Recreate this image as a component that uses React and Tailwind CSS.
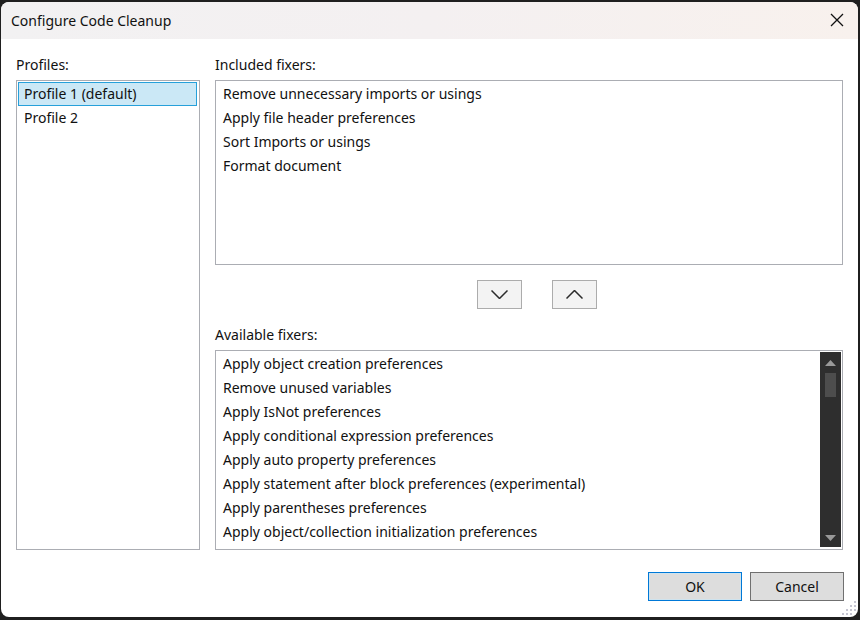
import { useRef, useState } from "react";

const profiles = ["Profile 1 (default)", "Profile 2"];

const includedFixers = [
  "Remove unnecessary imports or usings",
  "Apply file header preferences",
  "Sort Imports or usings",
  "Format document",
];

const availableFixers = [
  "Apply object creation preferences",
  "Remove unused variables",
  "Apply IsNot preferences",
  "Apply conditional expression preferences",
  "Apply auto property preferences",
  "Apply statement after block preferences (experimental)",
  "Apply parentheses preferences",
  "Apply object/collection initialization preferences",
];

function ListItems({ items, selected, onSelect }) {
  return items.map((item, i) => (
    <li
      key={item}
      role="option"
      aria-selected={selected === i}
      tabIndex={0}
      onClick={() => onSelect(i)}
      className={
        "h-6 cursor-default truncate border px-[5px] leading-[22px] outline-none " +
        (selected === i ? "border-[#26a0da] bg-[#cbe8f6]" : "border-transparent")
      }
    >
      {item}
    </li>
  ));
}

function Chevron({ up }) {
  return (
    <svg width="17" height="9" viewBox="0 0 17 9" fill="none" stroke="#2b2b2b" strokeWidth="1.5" aria-hidden="true">
      <path d={up ? "M.5 8.500l8-8 8 8" : "M.5.5l8 8 8-8"} />
    </svg>
  );
}

function ScrollBar({ onScroll }) {
  return (
    <div className="flex w-[21px] shrink-0 flex-col items-center bg-[#2e2e2e]">
      <button type="button" aria-label="Scroll up" onClick={() => onScroll(-24)} className="flex h-[21px] w-full items-center justify-center">
        <svg width="11" height="6" viewBox="0 0 11 6" fill="#999999" aria-hidden="true">
          <path d="M5.500 0 11 6H0z" />
        </svg>
      </button>
      <div className="h-6 w-[11px] bg-[#4d4d4d]" />
      <button type="button" aria-label="Scroll down" onClick={() => onScroll(24)} className="mt-auto flex h-[21px] w-full items-center justify-center pt-[3px]">
        <svg width="11" height="6" viewBox="0 0 11 6" fill="#999999" aria-hidden="true">
          <path d="M0 0h11L5.500 6z" />
        </svg>
      </button>
    </div>
  );
}

function ResizeGrip() {
  const dots = [[0, 12], [4, 12], [8, 12], [4, 8], [8, 8], [12, 8], [8, 4], [12, 4], [12, 0]];
  return (
    <svg className="absolute right-[2px] bottom-[2px]" width="14" height="14" viewBox="0 0 14 14" fill="#c6c6d2" aria-hidden="true">
      {dots.map(([x, y]) => (
        <rect key={x + "-" + y} x={x} y={y} width="2" height="2" />
      ))}
    </svg>
  );
}

export default function App() {
  const [profile, setProfile] = useState(0);
  const [included, setIncluded] = useState(-1);
  const [available, setAvailable] = useState(-1);
  const listRef = useRef(null);

  return (
    <div className="flex min-h-screen bg-[#1f1f1f] pt-[2px] pr-[2px] pb-[3px] pl-px font-['Noto_Sans',sans-serif] text-sm text-[#111111]">
      <main role="dialog" aria-labelledby="title" className="relative flex min-w-0 flex-1 flex-col overflow-hidden rounded-lg bg-white">
        <header className="flex h-[37px] items-center justify-between bg-linear-to-r from-[#f2f1f2] via-[#f4f0f1] to-[#f8f1ed] pr-[14px] pl-[10px]">
          <h1 id="title">Configure Code Cleanup</h1>
          <button type="button" aria-label="Close" className="pb-px">
            <svg width="14" height="14" viewBox="0 0 14 14" fill="none" stroke="#111111" strokeWidth="1.3" aria-hidden="true">
              <path d="M1 1l12 12M13 1 1 13" />
            </svg>
          </button>
        </header>

        <div className="flex flex-1 gap-[15px] px-[15px] pt-[14px]">
          <section className="flex w-[184px] shrink-0 flex-col">
            <h2 id="profiles" className="pb-[3px] leading-6">Profiles:</h2>
            <ul role="listbox" aria-labelledby="profiles" className="flex-1 border border-[#abadb3] py-px pr-[2px] pl-px">
              <ListItems items={profiles} selected={profile} onSelect={setProfile} />
            </ul>
          </section>

          <section className="flex min-w-0 flex-1 flex-col">
            <h2 id="included" className="pb-[3px] leading-6">Included fixers:</h2>
            <ul role="listbox" aria-labelledby="included" className="grow basis-[185px] border border-[#abadb3] p-px">
              <ListItems items={includedFixers} selected={included} onSelect={setIncluded} />
            </ul>

            <div className="flex justify-center gap-[30px] pt-[15px] pb-[14px] pl-4">
              <button type="button" aria-label="Move down" className="flex h-[29px] w-[45px] items-center justify-center border border-[#acacac] bg-[#f3f3f3]">
                <Chevron />
              </button>
              <button type="button" aria-label="Move up" className="flex h-[29px] w-[45px] items-center justify-center border border-[#acacac] bg-[#f3f3f3]">
                <Chevron up />
              </button>
            </div>

            <h2 id="available" className="pb-[3px] leading-6">Available fixers:</h2>
            <div className="flex grow basis-[200px] border border-[#abadb3] pt-px pr-px pb-[2px] pl-px">
              <ul ref={listRef} role="listbox" aria-labelledby="available" className="min-w-0 flex-1 overflow-hidden">
                <ListItems items={availableFixers} selected={available} onSelect={setAvailable} />
              </ul>
              <ScrollBar onScroll={(d) => listRef.current.scrollBy(0, d)} />
            </div>
          </section>
        </div>

        <footer className="flex justify-end gap-2 pt-[22px] pr-[14px] pb-4">
          <button type="button" className="h-[29px] w-[94px] border border-[#0078d7] bg-[#dddddd] pt-px shadow-[inset_0_0_0_1px_#cfe3ee]">OK</button>
          <button type="button" className="h-[29px] w-[94px] border border-[#707070] bg-[#dddddd] pt-px">Cancel</button>
        </footer>
        <ResizeGrip />
      </main>
    </div>
  );
}
